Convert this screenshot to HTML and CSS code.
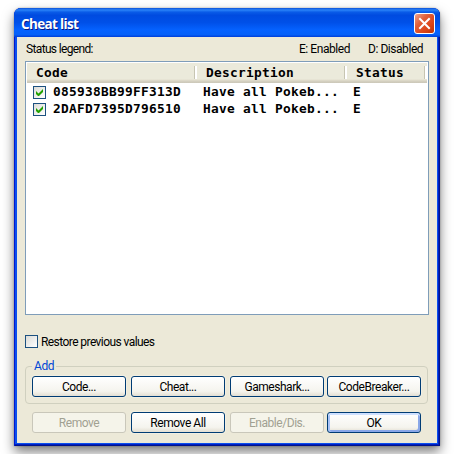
FILE: index.html
```html
<!DOCTYPE html>
<html lang="en">
<head>
<meta charset="utf-8">
<title>Cheat list</title>
<link rel="stylesheet" href="styles.css">
</head>
<body>
<main class="window">
  <header class="titlebar">
    <h1>Cheat list</h1>
    <button class="close" aria-label="Close"><svg width="19" height="19" viewBox="0 0 19 19"><path d="M5 5l9 9M14 5l-9 9" stroke="#fff" stroke-width="2" stroke-linecap="square"/></svg></button>
  </header>
  <div class="client">
    <div class="legend"><span class="status">Status legend:</span><span class="enabled">E: Enabled</span><span class="disabled">D: Disabled</span></div>
    <section class="list">
      <div class="row head"><span>Code</span><span>Description</span><span>Status</span></div>
      <div class="row"><i class="check"><svg width="11" height="11" viewBox="0 0 11 11"><path d="M2 4v3l2 2h1l4-4V2L4.500 6.500z" fill="#21a100"/></svg></i><span>085938BB99FF313D</span><span>Have all Pokeb...</span><span>E</span></div>
      <div class="row"><i class="check"><svg width="11" height="11" viewBox="0 0 11 11"><path d="M2 4v3l2 2h1l4-4V2L4.500 6.500z" fill="#21a100"/></svg></i><span>2DAFD7395D796510</span><span>Have all Pokeb...</span><span>E</span></div>
    </section>
    <label class="restore"><i class="check"></i><span>Restore previous values</span></label>
    <fieldset class="group">
      <legend>Add</legend>
      <div class="buttons"><button>Code...</button><button>Cheat...</button><button>Gameshark...</button><button>CodeBreaker...</button></div>
    </fieldset>
    <div class="buttons bottom"><button disabled>Remove</button><button>Remove All</button><button disabled>Enable/Dis.</button><button class="default">OK</button></div>
  </div>
</main>
</body>
</html>
```
FILE: styles.css
```css
* { box-sizing: border-box; }
body {
  margin: 0;
  padding: 8px 14px;
  background: #fff;
  font: 12px/14px Roboto, "Liberation Sans", sans-serif;
  letter-spacing: -0.45px;
  color: #000;
  overflow: hidden;
}
.window {
  width: 426px;
  height: 438px;
  padding: 0 3px 3px;
  border-radius: 7px 7px 0 0;
  background: #0a4fee;
  box-shadow: inset 1px 0 #0019cf, inset -1px -1px #00138c, inset -2px -2px #001ec0, 0 6px 12px rgba(0,0,0,.5), 0 0 2px rgba(0,0,0,.35);
}
.titlebar {
  display: flex;
  justify-content: space-between;
  height: 29px;
  margin: 0 -3px;
  padding: 5px 5px 0 7px;
  border-radius: 7px 7px 0 0;
  background: linear-gradient(#0a50d8 0, #2a83f8 7%, #0a5ce8 14%, #004be0 25%, #0050e8 50%, #0562ff 76%, #0560f8 92%, #003dd7);
}
h1 {
  margin: 3px 0 0;
  font: bold 13.5px/16px "Open Sans", sans-serif;
  letter-spacing: -0.65px;
  color: #fff;
  text-shadow: 1px 1px #0a1883;
}
.close {
  width: 21px;
  height: 21px;
  padding: 0;
  border: 1px solid #fff;
  border-radius: 3px;
  background: linear-gradient(135deg, #f0a48c, #e2603a 35%, #dc4418 70%, #b83208);
}
.close svg { display: block; }
.client {
  height: 406px;
  padding: 5px 8px 0;
  background: #ece9d8;
}
.legend { display: flex; height: 19px; }
.status { width: 274px; padding-left: 1px; letter-spacing: -0.65px; }
.enabled { width: 69px; }
.list {
  width: 404px;
  height: 254px;
  padding: 1px;
  border: 1px solid #7f9db9;
  background: #fff;
  font: bold 12.8px/17px "DejaVu Sans Mono", monospace;
  letter-spacing: .29px;
}
.row {
  display: grid;
  grid-template-columns: 26px 150px 150px 60px;
  height: 17px;
  line-height: 15px;
  white-space: nowrap;
}
.row .check { margin: 2px 0 0 6px; }
.head {
  grid-template-columns: 170px 150px 80px;
  height: 20px;
  margin-bottom: 1px;
  background: linear-gradient(#ebeadb 0 16px, #e2dece 17px, #d6d2c2 18px, #cbc7b8);
  line-height: 19px;
}
.head span { position: relative; padding-left: 9px; }
.head span::after {
  content: "";
  position: absolute;
  top: 3px;
  right: 0;
  width: 2px;
  height: 13px;
  border-left: 1px solid #c7c5b2;
  background: #fff;
}
.check {
  display: block;
  width: 13px;
  height: 13px;
  border: 1px solid #1c5180;
  background: linear-gradient(135deg, #dcdcd7, #fff);
}
.check svg { display: block; }
.restore { display: flex; gap: 3px; height: 14px; margin-top: 20px; letter-spacing: -0.57px; }
.group {
  position: relative;
  width: 402px;
  height: 38px;
  margin: 17px 0 0;
  padding: 10px 6px;
  border: 1px solid #d0d0bf;
  border-radius: 4px;
}
.group legend {
  position: absolute;
  top: -8px;
  left: 6px;
  padding: 0 2px;
  background: #ece9d8;
  color: #0046d5;
}
.buttons { display: grid; grid-template-columns: 99px 99px 97px 94px; }
.group .buttons { margin-top: -1px; }
.buttons button {
  width: 94px;
  height: 21px;
  padding: 0;
  border: 1px solid #003c74;
  border-radius: 3px;
  background: linear-gradient(#fff, #f5f4ee 75%, #e3dfd3);
  box-shadow: 0 0 0 1px rgba(255,255,255,.25);
  color: #000;
  font: inherit;
  letter-spacing: inherit;
  white-space: nowrap;
}
.buttons button:disabled {
  border-color: #c9c7ba;
  background: #f5f4ea;
  box-shadow: none;
  color: #a1a192;
}
.buttons .default { box-shadow: inset 0 2px #cee0ff, inset 2px 0 #a9c3f6, inset -2px -2px #89a7e8; }
.bottom { margin: 8px 0 0 7px; }
```
